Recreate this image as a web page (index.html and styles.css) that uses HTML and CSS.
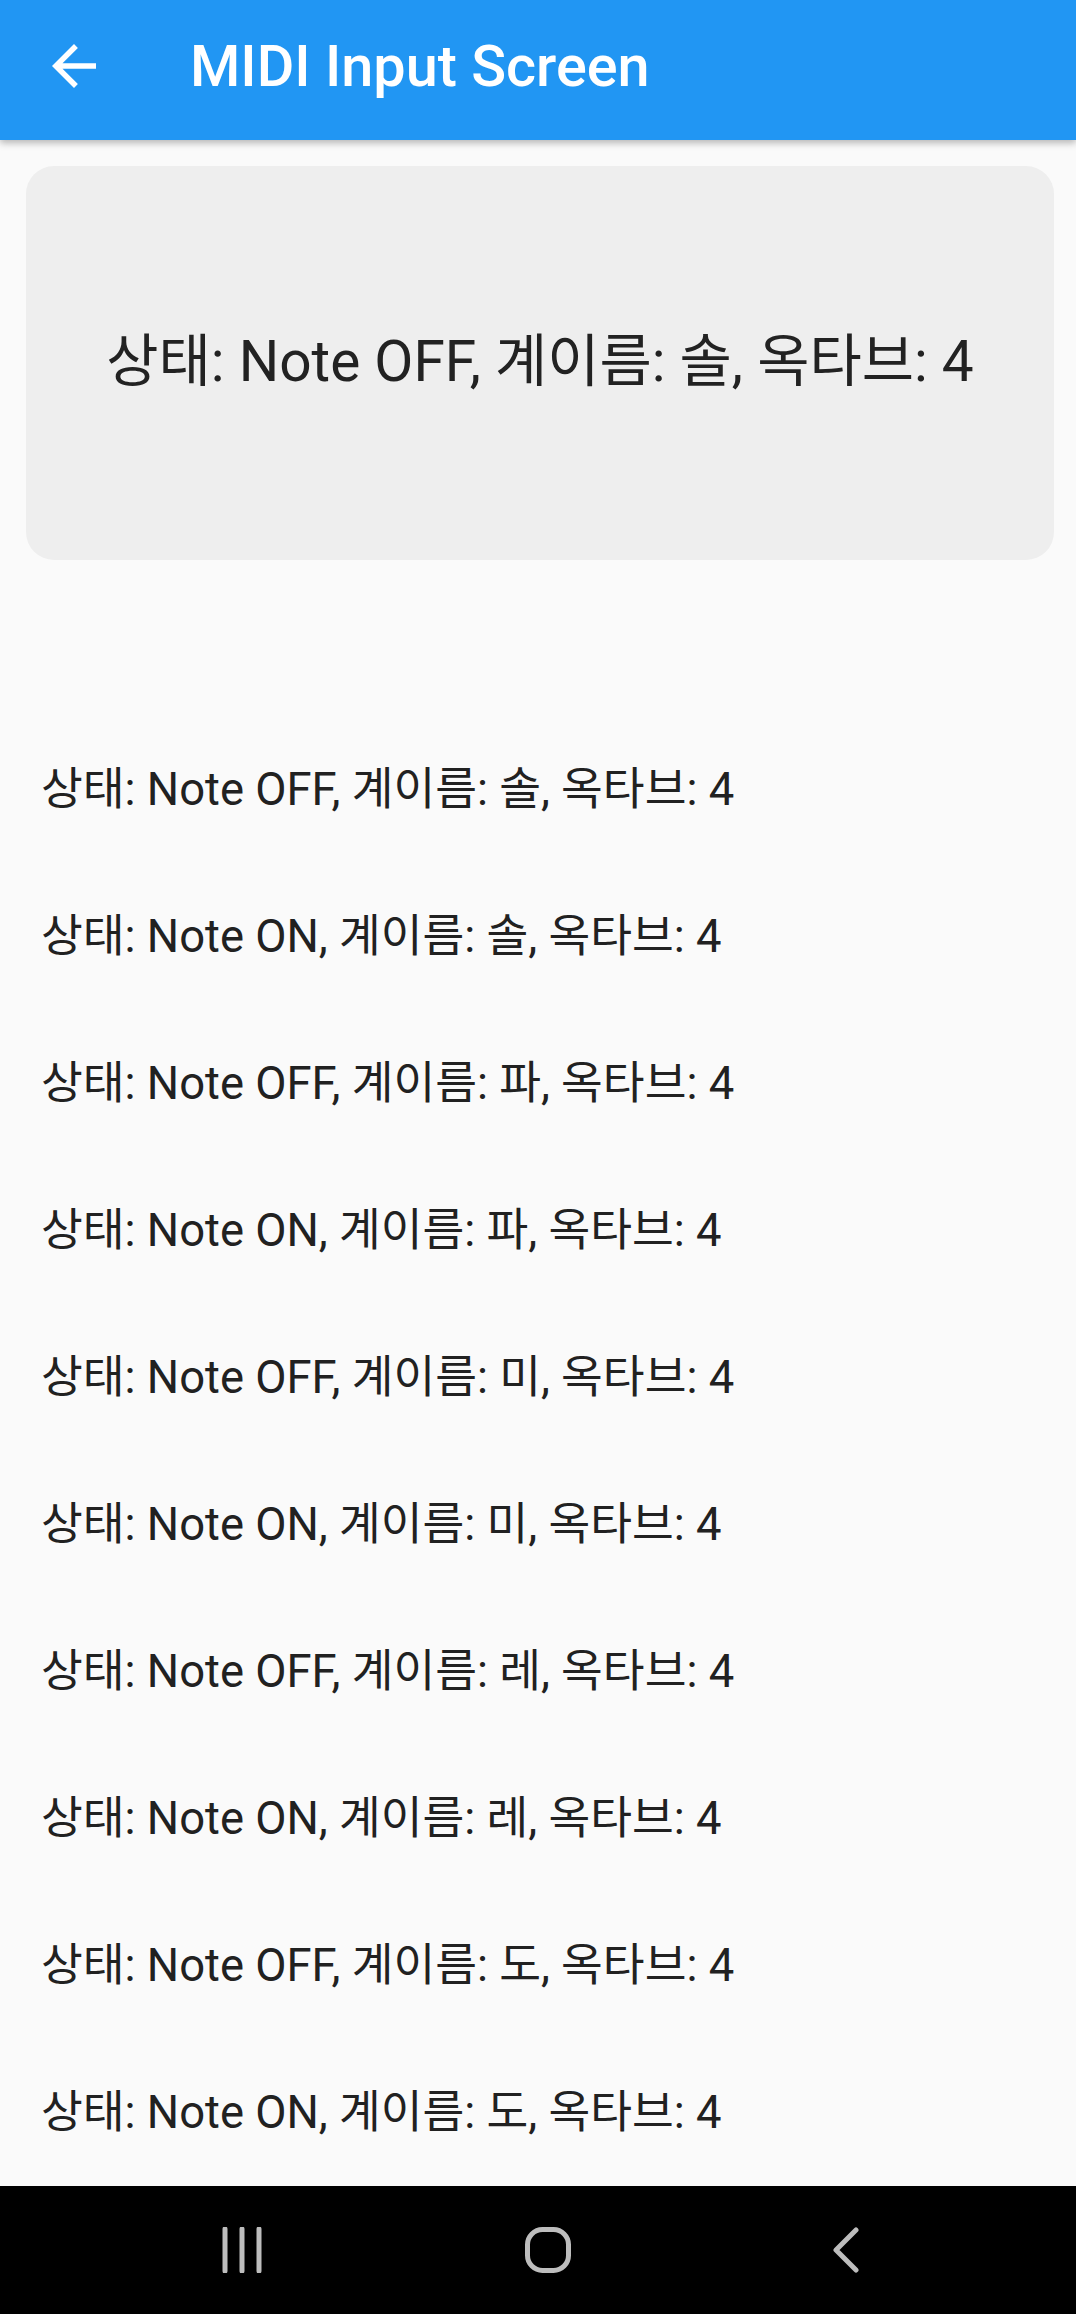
FILE: index.html
```html
<!DOCTYPE html>
<html lang="ko">
<head>
  <meta charset="utf-8">
  <title>MIDI Input Screen</title>
  <link rel="stylesheet" href="styles.css">
</head>
<body>

<div class="screen">
  <header class="app-bar">
    <button class="back-button" aria-label="Back">
      <svg viewBox="0 0 24 24" width="66" height="66">
        <path d="M20 11H7.83l5.59-5.59L12 4l-8 8 8 8 1.41-1.41L7.83 13H20v-2z" fill="#fff"/>
      </svg>
    </button>
    <h1 class="title">MIDI Input Screen</h1>
  </header>

  <main class="content">
    <!-- current note -->
    <div class="status-card">
      <p class="status-text">상태: Note OFF, 계이름: 솔, 옥타브: 4</p>
    </div>

    <!-- history -->
    <ul class="history">
      <li class="history-item">상태: Note OFF, 계이름: 솔, 옥타브: 4</li>
      <li class="history-item">상태: Note ON, 계이름: 솔, 옥타브: 4</li>
      <li class="history-item">상태: Note OFF, 계이름: 파, 옥타브: 4</li>
      <li class="history-item">상태: Note ON, 계이름: 파, 옥타브: 4</li>
      <li class="history-item">상태: Note OFF, 계이름: 미, 옥타브: 4</li>
      <li class="history-item">상태: Note ON, 계이름: 미, 옥타브: 4</li>
      <li class="history-item">상태: Note OFF, 계이름: 레, 옥타브: 4</li>
      <li class="history-item">상태: Note ON, 계이름: 레, 옥타브: 4</li>
      <li class="history-item">상태: Note OFF, 계이름: 도, 옥타브: 4</li>
      <li class="history-item">상태: Note ON, 계이름: 도, 옥타브: 4</li>
    </ul>
  </main>

  <nav class="nav-bar">
    <svg class="nav-icon" viewBox="0 0 46 46" width="46" height="46">
      <path d="M5 2v42M22 2v42M39 2v42" stroke="#bdbdbd" stroke-width="5" stroke-linecap="round"/>
    </svg>
    <svg class="nav-icon" viewBox="0 0 48 48" width="48" height="48">
      <rect x="3.5" y="3.5" width="41" height="41" rx="15" fill="none" stroke="#bdbdbd" stroke-width="5"/>
    </svg>
    <svg class="nav-icon" viewBox="0 0 30 46" width="30" height="46">
      <path d="M26 3L6 23l20 20" fill="none" stroke="#bdbdbd" stroke-width="5" stroke-linecap="round" stroke-linejoin="round"/>
    </svg>
  </nav>
</div>

</body>
</html>
```

FILE: styles.css
```css
body {
  margin: 0;
  background-color: #fafafa;
  font-family: Roboto, "Noto Sans CJK KR", sans-serif;
  color: #212121;
}
.screen {
  display: flex;
  flex-direction: column;
  height: 2314px;
  overflow: hidden;
}
.app-bar {
  display: flex;
  align-items: center;
  height: 140px;
  flex-shrink: 0;
  padding: 0 0 8px 41px;
  box-sizing: border-box;
  background-color: #2196f3;
  box-shadow: 0 3px 7px rgba(0,0,0,0.28);
  position: relative;
  z-index: 1;
}
.back-button {
  display: flex;
  background: none;
  border: none;
  padding: 0;
  margin: 0;
  cursor: pointer;
}
.title {
  margin: 0 0 0 83px;
  font-size: 57.6px;
  font-weight: 500;
  color: #fff;
}
.content {
  flex: 1;
}
.status-card {
  display: flex;
  align-items: center;
  justify-content: center;
  height: 394px;
  margin: 26px 22px 0 26px;
  background-color: #eeeeee;
  border-radius: 28px;
}
.status-text {
  margin: 0 0 14px;
  font-size: 56.8px;
  color: #222;
}
.history {
  list-style: none;
  margin: 156px 0 0;
  padding: 0;
}
.history-item {
  height: 147px;
  line-height: 147px;
  padding-left: 41px;
  font-size: 45.4px;
}
.nav-bar {
  display: flex;
  align-items: center;
  justify-content: space-between;
  height: 128px;
  flex-shrink: 0;
  padding: 0 216px 0 220px;
  background-color: #000;
}
.nav-icon {
  display: block;
}
```
